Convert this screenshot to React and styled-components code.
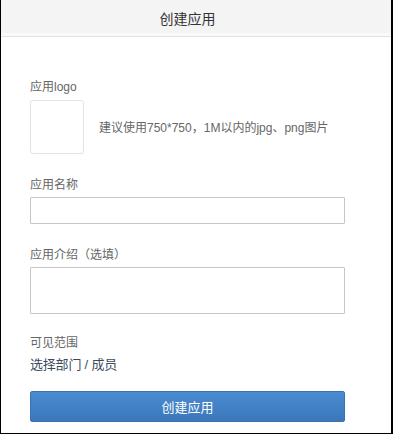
import React from "react";
import styled, { createGlobalStyle } from "styled-components";

const Global = createGlobalStyle`
  html, body { margin: 0; padding: 0; background: #fff; }
  body { font-family: "Liberation Sans", "Noto Sans CJK SC", sans-serif; }
  * { box-sizing: border-box; }
`;

const Frame = styled.div`
  width: 393px;
  height: 434px;
  border-left: 1px solid #000;
  border-right: 2px solid #000;
  border-bottom: 1px solid #000;
  background: #fff;
  display: flex;
  flex-direction: column;
`;

const Header = styled.div`
  height: 37px;
  flex: none;
  background: #f4f4f4;
  border-bottom: 1px solid #e2e2e2;
  box-shadow: inset 0 -3px 0 #fafafa;
  display: flex;
  align-items: center;
  justify-content: center;
  padding-right: 17px;
  font-size: 14px;
  color: #333;
`;

const Form = styled.div`
  padding: 0 0 0 29px;
  display: flex;
  flex-direction: column;
  width: 344px;
`;

const Label = styled.div`
  font-size: 12px;
  line-height: 16px;
  color: #666;
  margin-top: ${(p) => p.$top}px;
`;

const LogoRow = styled.div`
  display: flex;
  align-items: center;
  gap: 15px;
  margin-top: 5px;
`;

const LogoBox = styled.div`
  width: 54px;
  height: 54px;
  border: 1px solid #e3e3e3;
  border-radius: 3px;
  flex: none;
`;

const Hint = styled.span`
  font-size: 12px;
  color: #666;
  margin-top: -2px;
`;

const Input = styled.input`
  display: block;
  width: 315px;
  height: 27px;
  margin-top: 4px;
  border: 1px solid #c6c6c6;
  border-radius: 1px;
  outline: none;
  padding: 0 6px;
  font: inherit;
`;

const TextArea = styled.textarea`
  display: block;
  width: 315px;
  height: 47px;
  margin-top: 4px;
  border: 1px solid #c6c6c6;
  border-radius: 1px;
  outline: none;
  resize: none;
  padding: 4px 6px;
  font: inherit;
`;

const Picker = styled.div`
  margin-top: 5px;
  font-size: 13px;
  line-height: 18px;
  color: #3b4b5c;
  letter-spacing: -0.2px;
`;

const Button = styled.button`
  margin-top: 17px;
  width: 315px;
  height: 31px;
  border: 1px solid #3a72b0;
  border-radius: 2px;
  background: linear-gradient(#4a8bd1, #3b77ba);
  color: #fff;
  font-family: inherit;
  font-size: 13px;
  padding: 0;
`;

export default function App() {
  return (
    <>
      <Global />
      <Frame>
        <Header>创建应用</Header>
        <Form>
          <Label $top={42}>应用logo</Label>
          <LogoRow>
            <LogoBox />
            <Hint>建议使用750*750，1M以内的jpg、png图片</Hint>
          </LogoRow>
          <Label $top={23}>应用名称</Label>
          <Input />
          <Label $top={23}>应用介绍（选填）</Label>
          <TextArea />
          <Label $top={21}>可见范围</Label>
          <Picker>选择部门 / 成员</Picker>
          <Button>创建应用</Button>
        </Form>
      </Frame>
    </>
  );
}
